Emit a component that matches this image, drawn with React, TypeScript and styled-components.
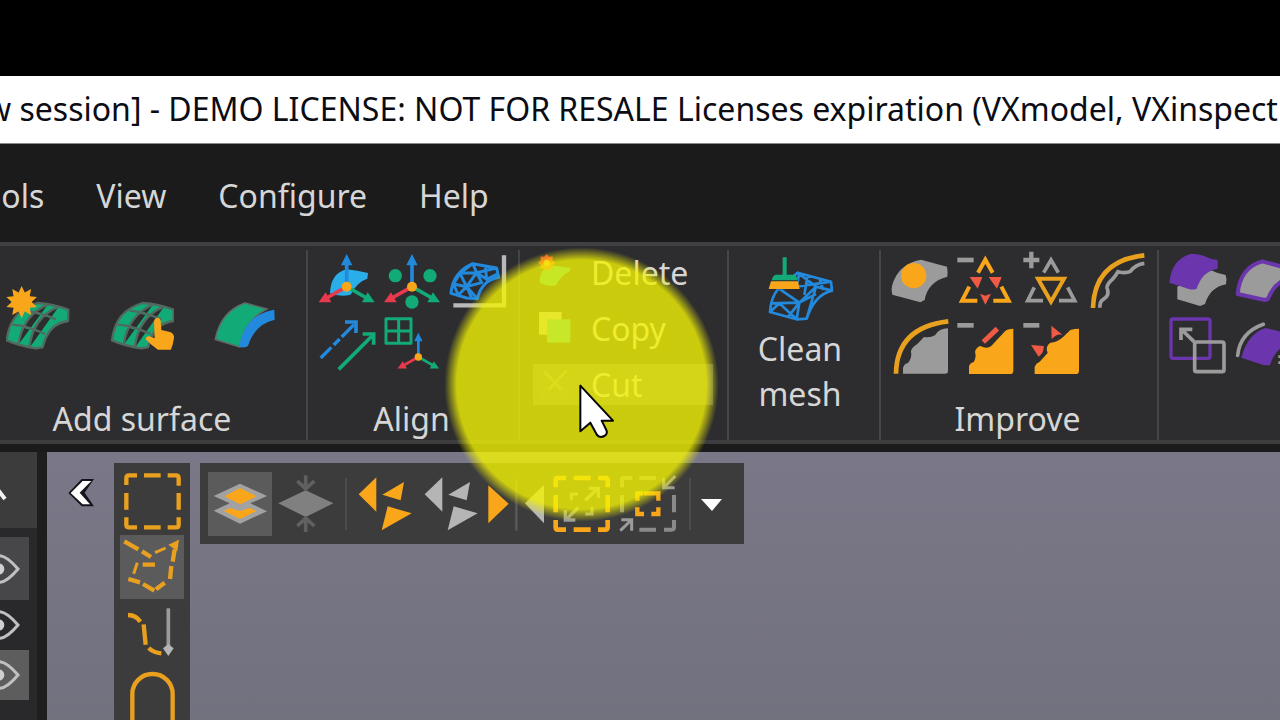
import React from "react";
import styled, { createGlobalStyle, css } from "styled-components";

const c = {
  orange: "#faa61a",
  amber: "#e9a01f",
  green: "#12ab78",
  blue: "#2389dc",
  red: "#e8394e",
  coral: "#f05a44",
  grey: "#9b9b9b",
  light: "#b5b5b5",
  purple: "#6a35ad",
  ribbon: "#2d2d2f",
  edge: "#403f41",
  tool: "#3c3c3c",
};

const GlobalStyle = createGlobalStyle`
  * { box-sizing: border-box; }
  body {
    margin: 0;
    background: #000;
    font-family: "Noto Sans", "Open Sans", sans-serif;
    font-size: 32px;
    color: #d6d6d6;
  }
  button {
    border: 0;
    padding: 0;
    background: none;
    font: inherit;
    color: inherit;
    cursor: default;
  }
  svg { display: block; }
`;

/* ---------- frame ---------- */

const Window = styled.div`
  position: relative;
  display: flex;
  flex-direction: column;
  height: 100vh;
  padding-top: 76px;
  overflow: hidden;
  white-space: nowrap;
`;

const TitleBar = styled.header`
  flex: none;
  height: 68px;
  overflow: hidden;
  background: #fff;
  border-bottom: 1px solid #8a8a8a;
`;

const Title = styled.h1`
  margin: 0 0 0 -14px;
  font-size: 32px;
  font-weight: 400;
  line-height: 66px;
  color: #0c0c14;
`;

const MenuBar = styled.nav`
  flex: none;
  display: flex;
  gap: 52px;
  height: 98px;
  padding-top: 4px;
  overflow: hidden;
  background: #1b1b1b;
`;

const MenuItem = styled.button<{ $cut?: boolean }>`
  ${(p) => p.$cut && css`margin-left: -18px;`}
`;

/* ---------- ribbon ---------- */

const Ribbon = styled.section`
  flex: none;
  display: flex;
  height: 210px;
  padding: 4px 0;
  overflow: hidden;
  background: ${c.ribbon};
  border-top: 4px solid ${c.edge};
  border-bottom: 8px solid #1b1b1c;
  box-shadow: inset 0 -4px 0 #3d3d3f;
`;

const Group = styled.div<{ $width?: number }>`
  display: flex;
  flex-direction: column;
  flex: ${(p) => (p.$width ? `0 0 ${p.$width}px` : "1 0 0")};
  ${(p) => p.$width && css`border-right: 2px solid #454547;`}
`;

const GroupLabel = styled.div<{ $shift?: boolean }>`
  margin-top: auto;
  height: 40px;
  line-height: 38px;
  text-align: center;
  padding-right: ${(p) => (p.$shift ? "22px" : "3px")};
`;

const SurfaceRow = styled.div`
  display: flex;
  gap: 40px;
  padding: 36px 6px 0;
`;

const IconGrid = styled.div<{ $cols: number }>`
  display: grid;
  grid-template-columns: repeat(${(p) => p.$cols}, 60px);
  gap: 6px;
  padding: 1px 0 0 9px;
`;

const IconButton = styled.button`
  display: block;
`;

const CommandList = styled.div`
  display: flex;
  flex-direction: column;
  gap: 15px;
  padding: 2px 14px 0 13px;
`;

const Command = styled.button<{ $active?: boolean }>`
  display: flex;
  align-items: center;
  gap: 16px;
  height: 41px;
  padding-left: 4px;
  background: ${(p) => (p.$active ? "#5c5c5f" : "transparent")};
`;

const TallButton = styled.button`
  display: flex;
  flex-direction: column;
  align-items: center;
  padding: 5px 8px 0 0;
  line-height: 45px;
  white-space: normal;

  span {
    width: 100px;
    margin-top: 3px;
  }
`;

/* ---------- workspace ---------- */

const Workspace = styled.main`
  flex: 1;
  display: flex;
  min-height: 0;
  overflow: hidden;
`;

const SidePanel = styled.aside`
  flex: none;
  width: 47px;
  overflow: hidden;
  background: #29292b;
  border-right: 10px solid #1e1e1f;
`;

const PanelHeader = styled.button`
  display: block;
  width: 37px;
  height: 76px;
  background: ${c.tool};
`;

const PanelRows = styled.div`
  width: 29px;
  padding-top: 9px;
`;

const PanelRow = styled.button<{ $tone: string; $height: number }>`
  display: flex;
  align-items: center;
  width: 100%;
  height: ${(p) => p.$height}px;
  background: ${(p) => p.$tone};
`;

const Canvas = styled.section`
  flex: 1;
  display: flex;
  align-items: flex-start;
  gap: 10px;
  min-width: 0;
  padding: 11px 0 0 20px;
  background: linear-gradient(#7a7888, #72717e);
`;

const CollapseButton = styled.button`
  flex: none;
  margin: 14px 8px 0 0;
`;

const VerticalTools = styled.div`
  flex: none;
  display: flex;
  flex-direction: column;
  gap: 1px;
  padding: 7px 6px;
  background: ${c.tool};
`;

const HorizontalTools = styled.div`
  flex: none;
  display: flex;
  align-items: center;
  gap: 2px;
  height: 81px;
  padding: 0 20px 0 8px;
  background: ${c.tool};
`;

const ToolButton = styled.button<{ $active?: boolean }>`
  width: 64px;
  height: 64px;
  background: ${(p) => (p.$active ? "#5b5b5b" : "transparent")};
`;

const Divider = styled.span`
  width: 2px;
  height: 52px;
  margin: 0 5px;
  background: #4c4c4c;
`;

/* ---------- pointer overlay ---------- */

const Halo = styled.div`
  position: absolute;
  left: 443px;
  top: 246px;
  width: 277px;
  height: 277px;
  border-radius: 50%;
  background: radial-gradient(circle closest-side, rgba(243, 243, 5, 0.8) 90%, rgba(243, 243, 5, 0) 99%);
  pointer-events: none;
`;

const Pointer = styled.svg`
  position: absolute;
  left: 578px;
  top: 383px;
  pointer-events: none;
`;

/* ---------- icons ---------- */

type ArtProps = { box: string; size?: number; children: React.ReactNode };

const Art = ({ box, size = 60, children }: ArtProps) => (
  <svg viewBox={box} width={size} height={size} fill="none" aria-hidden="true">
    {children}
  </svg>
);

const star = (cx: number, cy: number, outer: number, inner: number, n: number) =>
  Array.from({ length: n * 2 }, (_, i) => {
    const r = i % 2 ? inner : outer;
    const a = (i * Math.PI) / n - Math.PI / 2;
    return `${(cx + r * Math.cos(a)).toFixed(1)},${(cy + r * Math.sin(a)).toFixed(1)}`;
  }).join(" ");

const SurfaceMesh = () => (
  <path
    d="M112 189Q160 192 205 209L204 243Q145 250 128 322L108 325Q60 318 20 301Q30 212 112 189ZM144 193Q68 225 55 314M176 200Q98 232 88 324M72 212Q116 216 168 238M38 254Q84 258 136 282"
    fill={c.green}
    stroke="#52695f"
    strokeWidth="7"
    strokeLinejoin="round"
  />
);

const AxisTriad = ({ x, y, s = 1 }: { x: number; y: number; s?: number }) => (
  <g transform={`translate(${x} ${y}) scale(${s})`}>
    <path d="M0 0V-72" stroke={c.blue} strokeWidth="11" />
    <path d="M0 -98L17 -64H-17Z" fill={c.blue} />
    <path d="M0 0L-60 34" stroke={c.red} strokeWidth="11" />
    <path d="M-84 47L-63 17L-46 47Z" fill={c.red} />
    <path d="M0 0L60 34" stroke={c.green} strokeWidth="11" />
    <path d="M84 47L63 17L46 47Z" fill={c.green} />
    <circle r="15" fill={c.orange} />
  </g>
);

const Flip = ({ color }: { color: string }) => (
  <Art box="477 66 192 192" size={64}>
    <path d="M491 133L544 82V185Z" fill={color} />
    <path d="M562 134L627 96L617 151Z" fill={color} />
    <path d="M578 169L650 190L560 241Z" fill={color} />
  </Art>
);

const panelRows = [
  { tone: "#474749", height: 63 },
  { tone: "transparent", height: 50 },
  { tone: "#5d5d5e", height: 50 },
];

const App = () => (
  <>
    <GlobalStyle />
    <Window>
      <TitleBar>
        <Title>w session] - DEMO LICENSE: NOT FOR RESALE Licenses expiration (VXmodel, VXinspect</Title>
      </TitleBar>

      <MenuBar>
        <MenuItem $cut>ools</MenuItem>
        <MenuItem>View</MenuItem>
        <MenuItem>Configure</MenuItem>
        <MenuItem>Help</MenuItem>
      </MenuBar>

      <Ribbon>
        <Group $width={308}>
          <SurfaceRow>
            <IconButton aria-label="Auto surface">
              <Art box="18 138 192 192" size={64}>
                <SurfaceMesh />
                <polygon points={star(65, 186, 48, 30, 10)} fill={c.orange} />
              </Art>
            </IconButton>
            <IconButton aria-label="Manual surface">
              <Art box="14 138 192 192" size={64}>
                <SurfaceMesh />
                <path
                  d="M146 244Q148 234 156 233Q165 234 166 244L168 270L194 276Q207 281 206 294L202 314Q199 321 197 329H158Q138 316 121 298Q122 288 132 289L148 295Z"
                  fill={c.orange}
                />
              </Art>
            </IconButton>
            <IconButton aria-label="Border surface">
              <Art box="642 138 192 192" size={64}>
                <path d="M735 189L800 207Q735 240 719 321L646 298Q662 215 735 189Z" fill={c.green} stroke="#5d6e68" strokeWidth="5" />
                <path d="M823 209L824 239Q765 252 744 318Q735 325 718 321Q732 225 823 209Z" fill={c.blue} />
              </Art>
            </IconButton>
          </SurfaceRow>
          <GroupLabel $shift>Add surface</GroupLabel>
        </Group>

        <Group $width={212}>
          <IconGrid $cols={3}>
            <IconButton aria-label="Align surface">
              <Art box="51 33 180 180">
                <path d="M90 160Q92 100 140 88Q172 92 204 99L202 116Q170 126 152 164Q120 172 90 160Z" fill="#2aaeea" />
                <AxisTriad x={140} y={140} />
              </Art>
            </IconButton>
            <IconButton aria-label="Align points">
              <Art box="249 33 180 180">
                <circle cx="286" cy="107" r="20" fill={c.green} />
                <circle cx="390" cy="107" r="20" fill={c.green} />
                <circle cx="336" cy="186" r="20" fill={c.green} />
                <AxisTriad x={336} y={140} />
              </Art>
            </IconButton>
            <IconButton aria-label="Align mesh">
              <Art box="447 33 180 180">
                <path d="M612 46V196H460" stroke="#b9b9b9" strokeWidth="13" />
                <path
                  d="M453 160Q458 98 518 71L590 84L596 112Q545 122 532 176L500 174L453 160ZM518 71L480 100L460 132L500 140L532 176M518 71L530 98L590 84M480 100L530 98L560 118M480 100L500 140L530 98M460 132L475 165L500 140L515 174M500 140L545 128L530 98M556 78L560 118L596 100"
                  stroke={c.blue}
                  strokeWidth="9"
                  strokeLinejoin="round"
                />
              </Art>
            </IconButton>
            <IconButton aria-label="Align vectors">
              <Art box="51 231 180 180">
                <path d="M62 354L94 322M101 315L119 297M125 291L162 254" stroke={c.blue} strokeWidth="10" />
                <path d="M135 246H168V279" stroke={c.blue} strokeWidth="11" />
                <path d="M116 388L216 288" stroke={c.green} strokeWidth="11" />
                <path d="M188 282H221V314" stroke={c.green} strokeWidth="11" />
              </Art>
            </IconButton>
            <IconButton aria-label="Align to grid">
              <Art box="249 231 180 180">
                <path d="M258 236H333V310H258ZM296 236V310M258 273H333" stroke={c.green} strokeWidth="9" strokeLinejoin="round" />
                <AxisTriad x={355} y={351} s={0.74} />
              </Art>
            </IconButton>
          </IconGrid>
          <GroupLabel>Align</GroupLabel>
        </Group>

        <Group $width={209}>
          <CommandList>
            <Command>
              <Art box="292 42 114 114" size={38}>
                <path d="M302 106Q310 84 335 76L392 84L390 94Q362 108 350 136Q326 142 300 128Z" fill="#18b8a0" />
                <polygon points={star(321, 68, 26, 19, 8)} fill="#f4472e" />
                <circle cx="321" cy="68" r="9" fill="#ffb52e" />
              </Art>
              Delete
            </Command>
            <Command>
              <Art box="292 210 114 114" size={38}>
                <path d="M298 216H366V284H298Z" fill="#b9b9b9" />
                <path d="M322 238H392V308H322Z" fill="#18b8b8" />
              </Art>
              Copy
            </Command>
            <Command $active>
              <Art box="292 378 114 114" size={38}>
                <path d="M312 392L366 450M380 392L326 450" stroke="#858585" strokeWidth="9" />
                <circle cx="318" cy="460" r="12" stroke="#4f6e66" strokeWidth="7" />
                <circle cx="374" cy="460" r="12" stroke="#4f6e66" strokeWidth="7" />
              </Art>
              Cut
            </Command>
          </CommandList>
        </Group>

        <Group $width={152}>
          <TallButton>
            <Art box="140 45 204 204" size={68}>
              <path
                d="M178 145L235 98L335 125L338 152Q285 165 262 236L232 238L152 216Q155 170 178 145ZM178 145L232 140L240 98M232 140L335 125M152 190L240 188L178 145M240 188L232 238L180 190M152 216L180 190M235 98L290 140L338 152M240 188L290 140L262 236M240 188L290 162M265 105L255 165M300 115L312 150M205 232L240 188"
                stroke={c.blue}
                strokeWidth="8"
                strokeLinejoin="round"
              />
              <path d="M160 118H235L241 148H148Z" fill={c.ribbon} />
              <path d="M190 52H202V104H224Q233 106 234 121H157Q160 106 170 104H190Z" fill={c.green} />
              <path d="M155 124H236L241 147H148Z" fill={c.orange} />
            </Art>
            <span>Clean mesh</span>
          </TallButton>
        </Group>

        <Group $width={278}>
          <IconGrid $cols={4}>
            <IconButton aria-label="Fill holes">
              <Art box="27 33 180 180">
                <path d="M120 59L198 80Q201 95 199 110Q140 125 131 180L118 187L34 164Q30 150 33 138Q50 72 120 59Z" fill={c.grey} />
                <circle cx="98" cy="107" r="38" fill={c.orange} />
              </Art>
            </IconButton>
            <IconButton aria-label="Decimate">
              <Art box="225 33 180 180">
                <path d="M229 60H278" stroke={c.grey} strokeWidth="14" />
                <path d="M291 98L313 59L335 98M265 140L243 182H289M361 140L383 182H337" stroke={c.orange} strokeWidth="12" />
                <path d="M266 111H304L290 146ZM323 111H362L348 146ZM297 161L313 167L330 161L313 194Z" fill={c.coral} />
              </Art>
            </IconButton>
            <IconButton aria-label="Refine">
              <Art box="423 33 180 180">
                <path d="M427 60H475M451 35V85" stroke={c.grey} strokeWidth="13" />
                <path d="M488 98L510 60L532 98M460 142L440 182H486M560 142L581 182H534" stroke={c.grey} strokeWidth="11" />
                <path d="M471 116H549L510 185Z" stroke={c.amber} strokeWidth="12" />
              </Art>
            </IconButton>
            <IconButton aria-label="Smooth boundary">
              <Art box="621 33 180 180">
                <path d="M636 204Q640 62 790 46" stroke={c.amber} strokeWidth="14" />
                <path d="M657 203Q655 186 667 178Q688 165 678 144Q677 133 694 118Q704 108 711 95Q735 101 748 94Q764 73 790 70" stroke={c.grey} strokeWidth="11" />
              </Art>
            </IconButton>
            <IconButton aria-label="Smooth surface">
              <Art box="27 231 180 180">
                <path d="M45 401Q47 262 202 244" stroke={c.amber} strokeWidth="14" />
                <path d="M201 265V393Q201 401 192 401H66V384Q70 370 80 370Q94 355 90 334Q92 322 109 312L129 291Q148 294 162 286Q174 265 201 265Z" fill={c.grey} />
              </Art>
            </IconButton>
            <IconButton aria-label="Remove ridges">
              <Art box="225 231 180 180">
                <path d="M229 256H278" stroke={c.grey} strokeWidth="14" />
                <path d="M397 266V392Q397 402 387 402H264V378Q268 368 278 366Q287 352 282 336Q285 322 298 318Q318 328 330 319L372 274Q378 266 397 266Z" fill={c.orange} />
                <path d="M307 306L349 266" stroke={c.coral} strokeWidth="15" />
              </Art>
            </IconButton>
            <IconButton aria-label="Remove spikes">
              <Art box="423 231 180 180">
                <path d="M427 256H475" stroke={c.grey} strokeWidth="14" />
                <path d="M594 266V392Q594 402 584 402H461V380Q465 369 476 365L500 339Q492 318 508 308Q530 306 547 290L568 270Q580 266 594 266Z" fill={c.orange} />
                <path d="M511 257L544 284Q526 280 512 298ZM450 315L488 318Q490 338 473 350Z" fill={c.coral} />
              </Art>
            </IconButton>
          </IconGrid>
          <GroupLabel>Improve</GroupLabel>
        </Group>

        <Group>
          <IconGrid $cols={2}>
            <IconButton aria-label="Combine">
              <Art box="82 33 180 180">
                <path d="M204 88Q228 100 255 105Q260 118 256 133Q208 142 193 192L178 198L110 178V140Z" fill={c.grey} />
                <path d="M152 41Q185 42 210 56L231 60V86Q185 93 168 146Q152 152 138 145L86 128Q92 58 152 41Z" fill={c.purple} />
              </Art>
            </IconButton>
            <IconButton aria-label="Merge">
              <Art box="280 33 180 180">
                <path d="M365 64L445 86V114Q400 128 382 177L372 180L291 162Q298 82 365 64Z" fill={c.grey} stroke={c.purple} strokeWidth="12" strokeLinejoin="round" />
              </Art>
            </IconButton>
            <IconButton aria-label="Scale">
              <Art box="82 231 180 180">
                <rect x="91" y="237" width="117" height="118" rx="6" stroke={c.purple} strokeWidth="10" />
                <path d="M160 305L124 270M121 300V268H155" stroke={c.grey} strokeWidth="11" />
                <rect x="162" y="306" width="88" height="89" rx="6" stroke={c.grey} strokeWidth="11" />
              </Art>
            </IconButton>
            <IconButton aria-label="Offset">
              <Art box="280 231 180 180">
                <path d="M291 346Q298 278 368 253" stroke={c.grey} strokeWidth="11" strokeLinecap="round" />
                <path d="M374 264L450 282V310Q404 322 388 376H370L302 353Q320 282 374 264Z" fill={c.purple} />
                <path d="M413 350H432M413 368H432" stroke={c.grey} strokeWidth="8" />
              </Art>
            </IconButton>
          </IconGrid>
        </Group>
      </Ribbon>

      <Workspace>
        <SidePanel>
          <PanelHeader aria-label="Collapse section">
            <svg viewBox="0 0 37 76" width="37" height="76" fill="none" aria-hidden="true">
              <path d="M-8 48L-2 38L5 47" stroke="#f2f2f2" strokeWidth="4" />
            </svg>
          </PanelHeader>
          <PanelRows>
            {panelRows.map((row, i) => (
              <PanelRow key={i} $tone={row.tone} $height={row.height} aria-label="Toggle visibility">
                <svg viewBox="0 -45 87 90" width="29" height="30" aria-hidden="true">
                  <path d="M-57 0Q-30 -40 0 -40Q22 -38 54 0Q22 38 0 40Q-30 40 -57 0Z" fill="none" stroke="#c0c0c0" strokeWidth="9" />
                  <circle cx="-4" r="17" fill="#d0d0d0" />
                </svg>
              </PanelRow>
            ))}
          </PanelRows>
        </SidePanel>

        <Canvas>
          <CollapseButton aria-label="Collapse panel">
            <svg viewBox="201 108 87 93" width="29" height="31" fill="none" aria-hidden="true">
              <path d="M245 114H282L254 155L282 196H245L205 156Z" fill="#14141c" />
              <path d="M248 120H274L239 155L270 190H248L212 156Z" fill="#fff" />
            </svg>
          </CollapseButton>

          <VerticalTools>
            <ToolButton aria-label="Rectangle selection">
              <Art box="360 90 192 192" size={64}>
                <path
                  d="M379 135V114Q379 106 387 106H411M432 106H482M503 106H528Q536 106 536 114V137M536 159V209M536 232V254Q536 262 528 262H503M482 262H432M411 262H388Q379 262 379 254V232M379 209V159"
                  stroke={c.amber}
                  strokeWidth="13"
                />
              </Art>
            </ToolButton>
            <ToolButton $active aria-label="Polygon selection">
              <Art box="360 285 192 192" size={64}>
                <path d="M373 304L415 328M426 334L453 351M524 328L518 365M514 378L510 417M494 428L468 448M463 452L429 432M420 427L385 417M428 374H465" stroke={c.amber} strokeWidth="13" />
                <path d="M465 338L497 324M401 401L412 368" stroke={c.amber} strokeWidth="9" />
                <path d="M505 314L537 299L532 334Z" fill={c.amber} />
              </Art>
            </ToolButton>
            <ToolButton aria-label="Curve selection">
              <Art box="360 480 192 192" size={64}>
                <path d="M384 525Q408 526 421 545M431 553Q434 585 437 614M446 624Q460 638 484 640" stroke={c.amber} strokeWidth="13" />
                <path d="M505 505V625" stroke={c.grey} strokeWidth="11" />
                <path d="M489 625Q500 616 505 612Q512 618 521 625L505 648Z" fill={c.light} />
              </Art>
            </ToolButton>
            <ToolButton aria-label="Lasso selection">
              <Art box="360 675 192 192" size={64}>
                <rect x="397" y="702" width="121" height="220" rx="60" stroke={c.amber} strokeWidth="13" />
              </Art>
            </ToolButton>
          </VerticalTools>

          <HorizontalTools>
            <ToolButton $active aria-label="Select through">
              <Art box="39 66 192 192" size={64}>
                <path d="M56 138L135 101L216 138L166 160L216 184L135 221L56 182L104 160Z" fill="#a2a2a2" />
                <path d="M135 114L185 139L135 163L88 139Z" fill={c.orange} />
                <path d="M86 183L105 174L135 183L164 174L185 183L135 207Z" fill={c.orange} />
              </Art>
            </ToolButton>
            <ToolButton aria-label="Select front">
              <Art box="237 66 192 192" size={64}>
                <path d="M250 160L332 121L415 160L332 201Z" fill="#808080" />
                <path d="M332 76V121M307 93L332 116L358 93M332 246V201M307 228L332 205L358 228" stroke="#606060" strokeWidth="11" />
              </Art>
            </ToolButton>
            <Divider />
            <ToolButton aria-label="Select all">
              <Flip color={c.orange} />
            </ToolButton>
            <ToolButton aria-label="Clear selection">
              <Flip color={c.light} />
            </ToolButton>
            <ToolButton aria-label="Invert selection">
              <Art box="138 696 192 192" size={64}>
                <path d="M145 736L206 791L145 850Z" fill={c.orange} />
                <path d="M229 718V872" stroke="#5a5a5a" strokeWidth="7" />
                <path d="M312 734L255 790L312 850Z" fill={c.light} />
              </Art>
            </ToolButton>
            <ToolButton aria-label="Grow selection">
              <Art box="336 696 192 192" size={64}>
                <path
                  d="M347 742V720Q347 714 353 714H378M401 714H452M474 714H496Q503 714 503 720V742M503 765V817M503 840V862Q503 869 496 869H474M452 869H401M378 869H353Q347 869 347 862V840M347 817V765"
                  stroke={c.orange}
                  strokeWidth="14"
                />
                <path d="M436 781L472 747M446 745H475V774M415 802L379 838M376 810V840H406" stroke={c.grey} strokeWidth="10" />
                <path d="M394 781V762H414M436 822H456V800" stroke={c.grey} strokeWidth="9" />
              </Art>
            </ToolButton>
            <ToolButton aria-label="Shrink selection">
              <Art box="534 696 192 192" size={64}>
                <path
                  d="M546 742V720Q546 714 552 714H577M598 714H648M546 765V817M702 765V817M702 840V862Q702 869 695 869H672M648 869H598"
                  stroke="#8a8a8a"
                  strokeWidth="12"
                />
                <path d="M706 708L676 738M671 714V743H704M541 872L574 840M544 839H575V872" stroke={c.grey} strokeWidth="9" />
                <path d="M610 760H592V782M592 802V822H612M634 822H655V802M655 782V760H634M612 760H634" stroke={c.orange} strokeWidth="13" />
              </Art>
            </ToolButton>
            <Divider />
            <IconButton aria-label="More tools">
              <svg viewBox="0 0 26 14" width="26" height="14" aria-hidden="true">
                <path d="M3 2H24L14 14Z" fill="#fff" />
              </svg>
            </IconButton>
          </HorizontalTools>
        </Canvas>
      </Workspace>

      <Halo />
      <Pointer viewBox="414 429 114 168" width="38" height="56" aria-hidden="true">
        <path
          d="M421 437V574L451 548L471 585Q480 595 493 588Q504 582 499 570L485 542H519Z"
          fill="#fff"
          stroke="#05050a"
          strokeWidth="6"
          strokeLinejoin="round"
        />
      </Pointer>
    </Window>
  </>
);

export default App;
